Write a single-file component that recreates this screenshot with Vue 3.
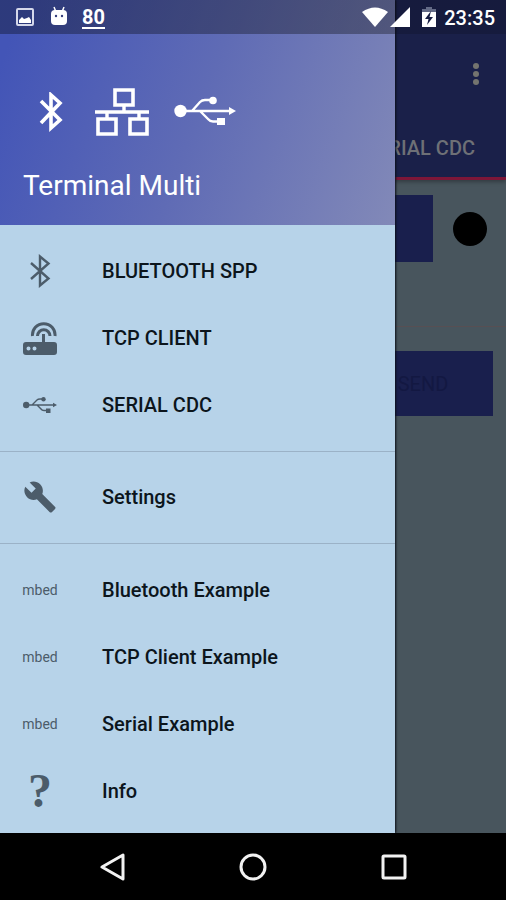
<script setup>
const groups = [
  [
    { label: 'BLUETOOTH SPP', icon: 'bluetooth' },
    { label: 'TCP CLIENT', icon: 'router' },
    { label: 'SERIAL CDC', icon: 'usb' },
  ],
  [{ label: 'Settings', icon: 'wrench' }],
  [
    { label: 'Bluetooth Example', icon: 'mbed' },
    { label: 'TCP Client Example', icon: 'mbed' },
    { label: 'Serial Example', icon: 'mbed' },
    { label: 'Info', icon: 'info' },
  ],
]
</script>

<template>
  <div class="screen">
    <div class="stage">
      <main class="page">
        <header class="appbar">
          <div class="toolbar">
            <button class="overflow" type="button" aria-label="More options">
              <svg width="6" height="24" viewBox="0 0 6 24"><circle cx="3" cy="4" r="3" /><circle cx="3" cy="12" r="3" /><circle cx="3" cy="20" r="3" /></svg>
            </button>
          </div>
          <nav class="tabs"><a href="#serial" class="tab">SERIAL CDC</a></nav>
        </header>
        <section class="connection">
          <button class="block" type="button" aria-label="Connect"></button>
          <span class="led"></span>
        </section>
        <section class="sender">
          <button class="block send" type="button">SEND</button>
        </section>
      </main>

      <aside class="drawer">
        <header class="hero">
          <div class="logos">
            <svg width="26" height="40" viewBox="0 0 26 40" fill="none" stroke="#fff" stroke-width="3.6"><path d="M3 9 22 28 13 36V3L22 11 3 31" /></svg>
            <svg width="56" height="50" viewBox="0 0 56 50" fill="none" stroke="#fff" stroke-width="3.6"><path d="M21 3H39V18H21ZM4 32H22V47H4ZM36 32H53V47H36Z" /><path d="M30 18V25M1 25H55M13 25V32M45 25V32" stroke-width="3.4" /></svg>
            <svg width="62" height="32" viewBox="0 0 62 32" fill="none" stroke="#fff" stroke-width="2.4"><path d="M6 15H56M18 15 26 6Q28 4 31 4H38M26 15 34 23Q36 25.500 39 25.500H46" /><g fill="#fff" stroke="none"><circle cx="6.500" cy="15" r="6.200" /><circle cx="39" cy="4.500" r="3.800" /><path d="M43 22H51V29H43ZM55 11 62 15 55 19Z" /></g></svg>
          </div>
          <h1 class="title">Terminal Multi</h1>
        </header>

        <nav class="menu">
          <ul v-for="(group, g) in groups" :key="g" class="group" :style="{ flexGrow: group.length }">
            <li v-for="item in group" :key="item.label" class="entry">
              <a href="#" class="row">
                <span class="icon" aria-hidden="true">
                  <svg v-if="item.icon === 'bluetooth'" width="34" height="34" viewBox="0 0 34 34" fill="none" stroke="#4c5c6a" stroke-width="2.4"><path d="M8 9 25.500 24.500 17 31.500V2.500L25.500 9.500 8 25" /></svg>
                  <svg v-else-if="item.icon === 'router'" width="34" height="34" viewBox="0 0 34 34"><path fill="#4c5c6a" fill-rule="evenodd" d="M3 21H19V13H22V21H31Q34 21 34 24V31Q34 34 31 34H3Q0 34 0 31V24Q0 21 3 21ZM5.500 25.500A2 2 0 1 0 5.500 29.500 2 2 0 1 0 5.500 25.500ZM11.500 25.500A2 2 0 1 0 11.500 29.500 2 2 0 1 0 11.500 25.500Z" /><path d="M9.500 15A11.300 11.300 0 1 1 32 15M14.500 15A6.200 6.200 0 1 1 27 15" fill="none" stroke="#4c5c6a" stroke-width="3" /></svg>
                  <svg v-else-if="item.icon === 'usb'" width="34" height="18" viewBox="0 0 34 18" fill="none" stroke="#4c5c6a" stroke-width="1.400"><path d="M3 9H31M9 9 14 4Q15 3 17 3H20M14 9 18 13Q19 14.500 21 14.500H24" /><g fill="#4c5c6a" stroke="none"><circle cx="3.200" cy="9" r="3.200" /><circle cx="20.500" cy="3.200" r="2.200" /><path d="M23 12.500H27.500V17H23ZM30 6.800 34 9 30 11.200Z" /></g></svg>
                  <svg v-else-if="item.icon === 'wrench'" width="34" height="34" viewBox="0 0 24 24"><path fill="#4c5c6a" d="M22.700 19l-9.100-9.100c.9-2.300.4-5-1.500-6.900-2-2-5-2.400-7.400-1.300L9 6 6 9 1.600 4.700C.4 7.100.9 10.100 2.900 12.100c1.900 1.900 4.600 2.400 6.900 1.500l9.100 9.100c.4.4 1 .4 1.400 0l2.300-2.300c.5-.4.5-1.100.1-1.400z" /></svg>
                  <span v-else-if="item.icon === 'mbed'" class="mbed">mbed</span>
                  <span v-else class="question">?</span>
                </span>
                {{ item.label }}
              </a>
            </li>
          </ul>
        </nav>
      </aside>

      <div class="status">
        <svg width="18" height="18" viewBox="0 0 18 18"><rect x="1" y="1" width="16" height="16" rx="1" fill="none" stroke="#d5d8ea" stroke-width="2" /><path fill="#fff" d="M3 15V12L6 9 8 11 11 10 13 9 15 12V15Z" /></svg>
        <svg class="droid" width="18" height="20" viewBox="0 0 18 20"><path d="M4 1 6 6M14 1 12 6" stroke="#fff" stroke-width="1.500" /><path fill="#fff" d="M1 8Q1 4 5 4H13Q17 4 17 8V15Q17 19 13 19H5Q1 19 1 15Z" /><circle cx="6" cy="10" r="1.200" fill="#353f7c" /><circle cx="12" cy="10" r="1.200" fill="#353f7c" /></svg>
        <span class="badge">80</span>
        <span class="spacer"></span>
        <svg width="26" height="20" viewBox="0 0 26 20"><path fill="#fff" d="M0 5Q13-4 26 5L13 20Z" /></svg>
        <svg class="signal" width="20" height="20" viewBox="0 0 20 20"><path fill="#fff" d="M20 0V20H0Z" /></svg>
        <svg class="battery" width="14" height="20" viewBox="0 0 14 20"><path fill="#646b86" d="M4 0H10V2H14V7H0V2H4Z" /><path fill="#fff" d="M0 5H14V20H0Z" /><path fill="#151b40" d="M9 4 3 12H6.500L5 18 11 10H7.500Z" /></svg>
        <time class="clock">23:35</time>
      </div>
    </div>

    <nav class="navbar">
      <button type="button" aria-label="Back"><svg width="28" height="28" viewBox="0 0 28 28"><path d="M25 2V26L4 14Z" /></svg></button>
      <button type="button" aria-label="Home"><svg width="28" height="28" viewBox="0 0 28 28"><circle cx="14" cy="14" r="12" /></svg></button>
      <button type="button" aria-label="Recent apps"><svg width="28" height="28" viewBox="0 0 28 28"><rect x="3" y="3" width="22" height="22" rx="1" /></svg></button>
    </nav>
  </div>
</template>

<style>
body {
  background: #000;
}
</style>

<style scoped>
.screen {
  display: flex;
  flex-direction: column;
  min-height: 100vh;
  font-family: Roboto, "Liberation Sans", sans-serif;
}
svg {
  display: block;
  flex: none;
}
button {
  margin: 0;
  padding: 0;
  border: 0;
  background: none;
  font: inherit;
}
a {
  color: inherit;
  text-decoration: none;
}
.stage {
  flex: 1;
  display: grid;
  grid-template-columns: minmax(0, 1fr);
}
.page,
.drawer,
.status {
  grid-area: 1 / 1;
}

.page {
  background: #48555d;
}
.appbar {
  padding-top: 34px;
  background: #1a2049;
  border-bottom: 3px solid #7d1638;
  box-shadow: 0 2px 4px rgba(0, 0, 0, 0.3);
}
.toolbar {
  display: flex;
  justify-content: flex-end;
  align-items: center;
  height: 79px;
  padding-right: 27px;
}
.overflow svg {
  fill: #74746f;
}
.tabs {
  display: flex;
  justify-content: flex-end;
  align-items: center;
  height: 64px;
  padding: 0 31px 0 0;
  line-height: 24px;
}
.tab {
  padding-top: 6px;
  color: #6e7076;
  font-size: 20px;
  font-weight: 500;
}
.connection {
  display: flex;
  align-items: center;
  gap: 20px;
  height: 67px;
  padding: 15px 19px 64px 12px;
  border-bottom: 1px solid #574f53;
}
.block {
  flex: 1;
  height: 67px;
  background: #191f4d;
}
.led {
  width: 34px;
  height: 34px;
  border-radius: 50%;
  background: #000;
}
.sender {
  display: flex;
  justify-content: flex-end;
  padding: 24px 13px;
}
.send {
  flex: 0 0 140px;
  height: 65px;
  color: #131842;
  font-size: 20px;
}

.drawer {
  display: flex;
  flex-direction: column;
  width: 78%;
  background: #b7d3e9;
  box-shadow: 1px 0 2px #0b0f18;
}
.hero {
  box-sizing: border-box;
  height: 225px;
  padding: 84px 23px 0;
  background: linear-gradient(110deg, #4355b7 5%, #5f6bb5 50%, #8289b8 100%);
  color: #fff;
}
.logos {
  display: flex;
  align-items: center;
  gap: 24px;
  height: 56px;
  padding-left: 15px;
}
.logos svg:first-child {
  margin-right: 6px;
}
.title {
  margin: 28px 0 0;
  font-size: 28px;
  font-weight: 400;
  line-height: 36px;
}
.menu {
  flex: 1;
  display: flex;
  flex-direction: column;
}
.group {
  display: flex;
  flex-direction: column;
  margin: 0;
  padding: 12px 0;
  list-style: none;
}
.group + .group {
  border-top: 1px solid #9bb2c7;
}
.group:last-child {
  padding-bottom: 8px;
}
.entry {
  flex: 1;
  display: flex;
}
.row {
  flex: 1;
  display: flex;
  align-items: center;
  gap: 45px;
  min-height: 67px;
  padding-left: 23px;
  color: #0c151c;
  font-size: 20px;
  font-weight: 500;
  line-height: 24px;
}
.icon {
  flex: none;
  display: flex;
  justify-content: center;
  width: 34px;
  color: #4c5c6a;
}
.mbed {
  font-size: 14px;
  font-weight: 400;
}
.question {
  font-family: "Liberation Serif", serif;
  font-size: 48px;
  font-weight: 700;
  line-height: 48px;
}

.status {
  align-self: start;
  display: flex;
  align-items: center;
  height: 34px;
  padding: 0 11px 0 16px;
  background: linear-gradient(90deg, rgba(0, 0, 0, 0.32) 78%, rgba(0, 0, 0, 0.16) 78%);
  color: #fff;
  font-size: 20px;
  font-weight: 500;
}
.droid {
  margin: 0 14px 2px 16px;
}
.badge {
  padding-top: 2px;
  border-bottom: 2px solid #fff;
  font-weight: 700;
  line-height: 20px;
}
.spacer {
  flex: 1;
}
.signal {
  margin: 0 12px 0 2px;
}
.battery {
  margin-right: 8px;
}
.clock {
  line-height: 20px;
  padding-top: 2px;
}

.navbar {
  display: flex;
  justify-content: space-between;
  align-items: center;
  height: 67px;
  padding: 0 98px;
  background: #000;
}
.navbar button {
  flex: 0 0 28px;
}
.navbar svg {
  fill: none;
  stroke: #f2f2f2;
  stroke-width: 3;
  stroke-linejoin: round;
}
</style>
